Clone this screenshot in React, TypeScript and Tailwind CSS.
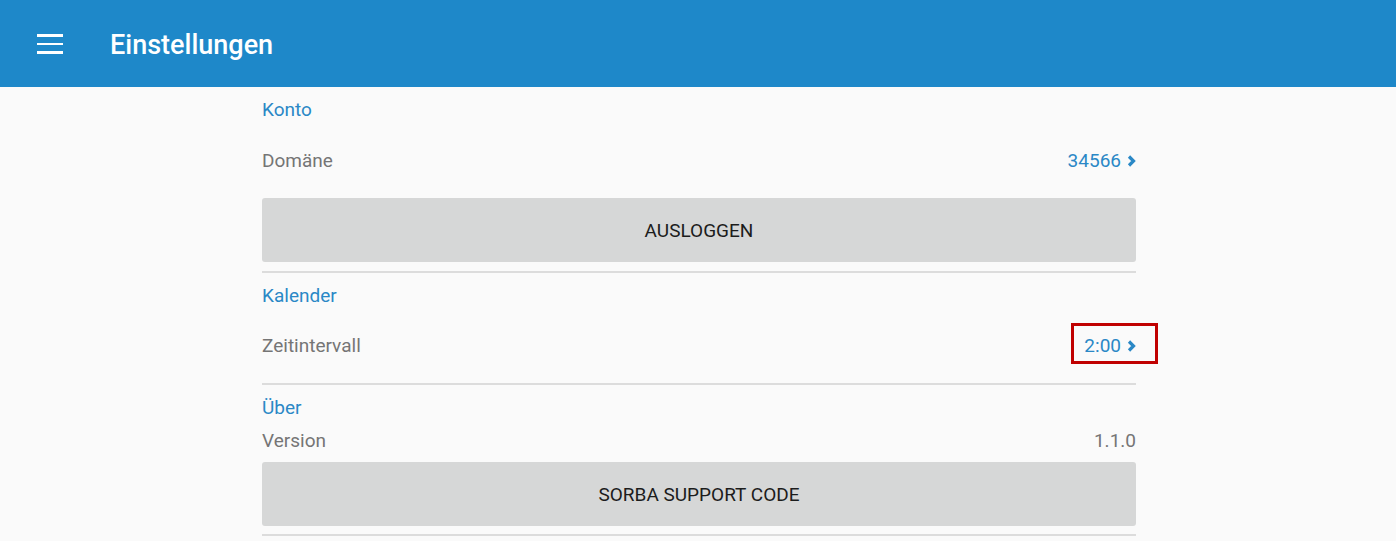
const Chevron = () => (
  <svg width="9" height="12" viewBox="0 0 9 12" className="ml-[6px]">
    <path d="M2 1.5 L6.5 6 L2 10.5" fill="none" stroke="#2a88c6" strokeWidth="3.2" />
  </svg>
);

const SectionTitle = ({ title }: { title: string }) => (
  <div className="flex h-[44px] items-center pt-[2px] text-[19px] text-[#2a88c6]">{title}</div>
);

const Divider = () => <div className="h-[2px] bg-[#dcdcdc]" />;

const GrayButton = ({ label }: { label: string }) => (
  <button className="flex h-[64px] w-full items-center justify-center rounded-[3px] bg-[#d6d7d7] pt-[3px] text-[19px] font-normal uppercase text-[#1c1c1c]">
    {label}
  </button>
);

export default function App() {
  return (
    <div className="flex h-[541px] flex-col overflow-hidden bg-[#fafafa] font-['Roboto',sans-serif]">
      {/* Header */}
      <header className="flex h-[87px] shrink-0 items-center bg-[#1e88c9] pl-[37px]">
        <div className="mt-[1px] flex w-[26px] flex-col gap-[6px]">
          <span className="h-[2.5px] bg-white" />
          <span className="h-[2.5px] bg-white" />
          <span className="h-[2.5px] bg-white" />
        </div>
        <h1 className="ml-[47px] mt-[3px] text-[27px] font-medium text-white">Einstellungen</h1>
      </header>

      {/* Content */}
      <main className="ml-[262px] w-[874px]">
        <SectionTitle title="Konto" />
        <div className="flex h-[58px] items-center justify-between pt-[2px] text-[19px]">
          <span className="text-[#757575]">Domäne</span>
          <span className="flex items-center text-[#2a88c6]">
            34566
            <Chevron />
          </span>
        </div>
        <div className="pb-[9px] pt-[9px]">
          <GrayButton label="Ausloggen" />
        </div>
        <Divider />

        <SectionTitle title="Kalender" />
        <div className="flex h-[58px] items-center justify-between text-[19px]">
          <span className="text-[#757575]">Zeitintervall</span>
          <span className="relative flex items-center text-[#2a88c6]">
            2:00
            <Chevron />
            <span className="absolute -bottom-[4px] -left-[13px] -right-[22px] -top-[9px] border-[3px] border-[#c00000]" />
          </span>
        </div>
        <div className="h-[8px]" />
        <Divider />

        <SectionTitle title="Über" />
        <div className="flex h-[22px] items-center justify-between pt-[2px] text-[19px] text-[#757575]">
          <span>Version</span>
          <span>1.1.0</span>
        </div>
        <div className="pb-[8px] pt-[11px]">
          <GrayButton label="Sorba Support Code" />
        </div>
        <Divider />
      </main>
    </div>
  );
}
